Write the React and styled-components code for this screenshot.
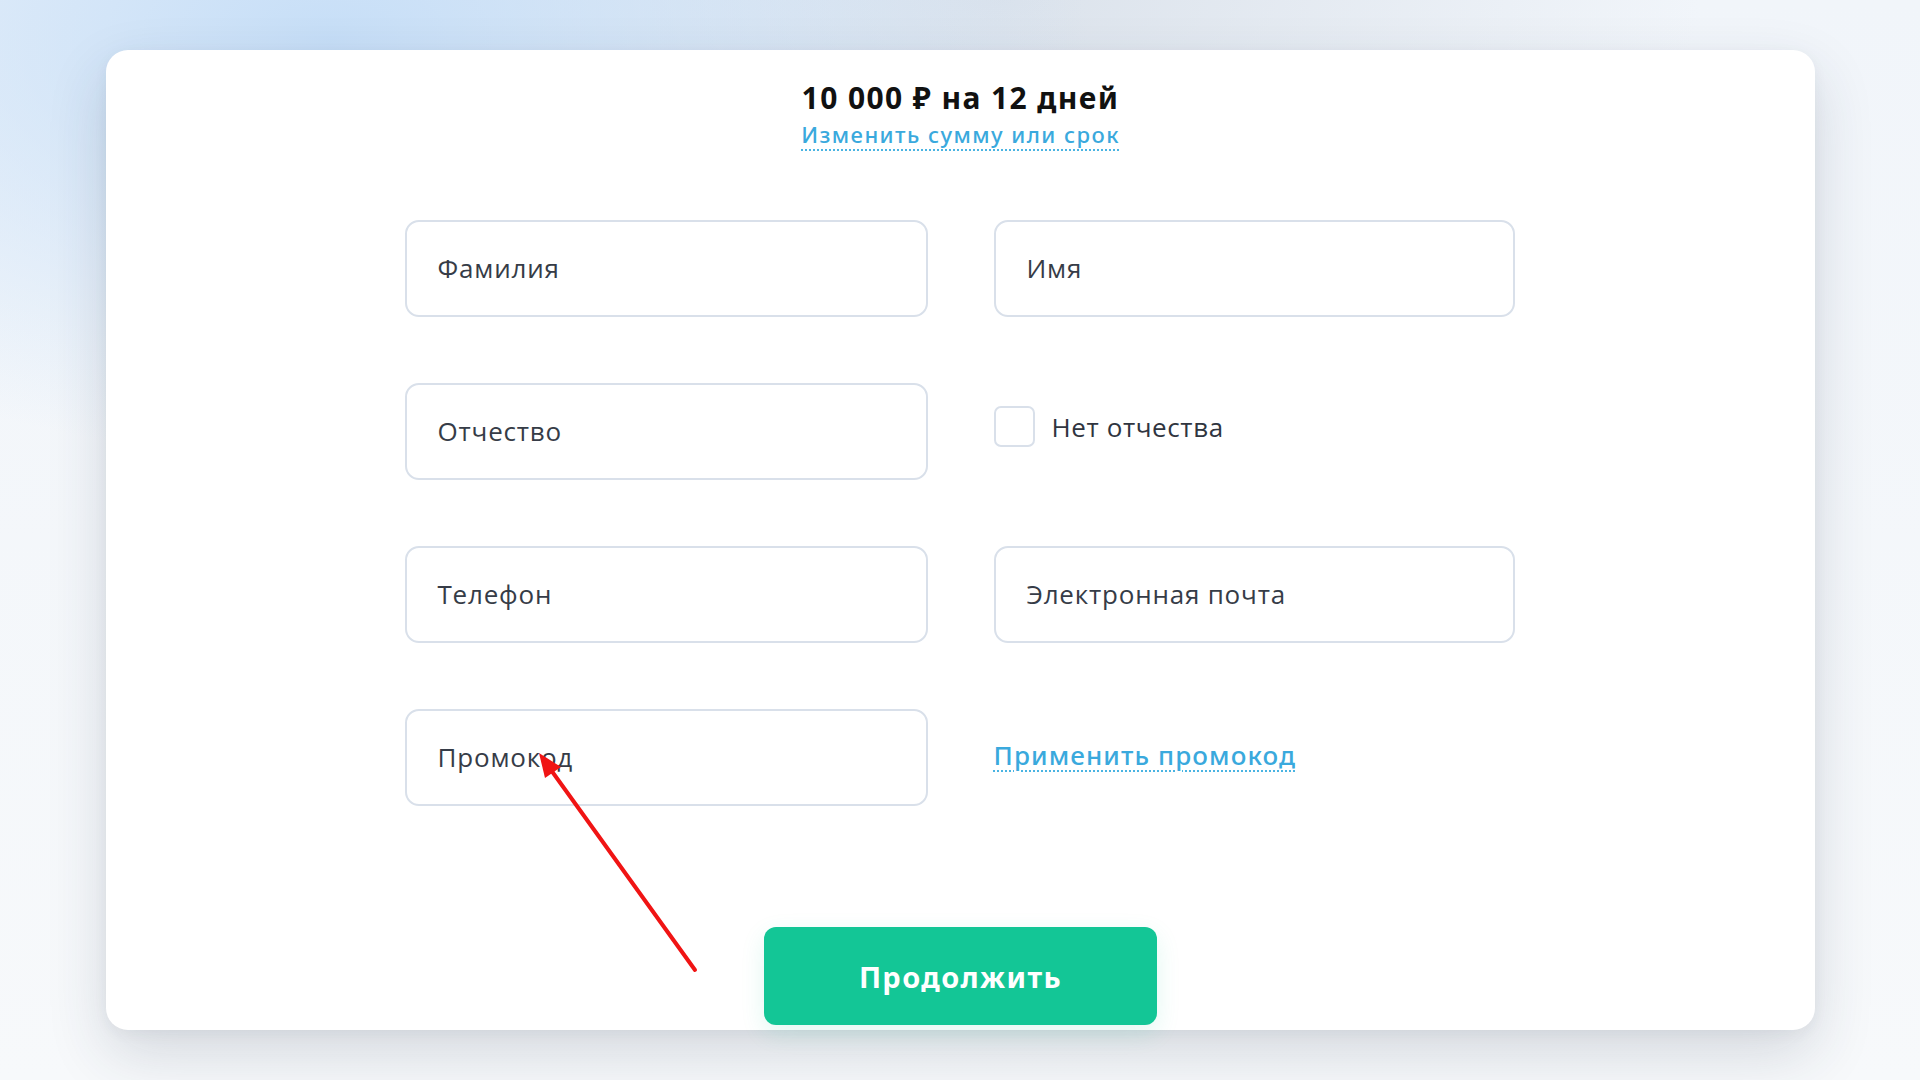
import React from 'react';
import styled, { createGlobalStyle } from 'styled-components';

const GlobalStyle = createGlobalStyle`
    html, body {
        margin: 0;
        padding: 0;
    }
    body {
        width: 1920px;
        height: 1080px;
        overflow: hidden;
        font-family: "Open Sans", "Liberation Sans", sans-serif;
        background:
            radial-gradient(ellipse 760px 420px at 330px 40px, rgba(196, 221, 247, 0.95) 0%, rgba(196, 221, 247, 0) 100%),
            radial-gradient(ellipse 700px 300px at 1000px 0px, rgba(214, 222, 232, 0.8) 0%, rgba(214, 222, 232, 0) 100%),
            linear-gradient(180deg, #f1f5fa 0%, #f7f9fb 100%);
    }
`;

const Page = styled.div`
    box-sizing: border-box;
    height: 1080px;
    padding: 50px 105px 50px 106px;
`;

const Card = styled.div`
    position: relative;
    box-sizing: border-box;
    height: 980px;
    background: #ffffff;
    border-radius: 22px;
    box-shadow: 0 24px 60px rgba(40, 52, 72, 0.16), 0 4px 14px rgba(40, 52, 72, 0.05);
    padding: 30px 0 4px;
    display: flex;
    flex-direction: column;
    align-items: center;
`;

const Title = styled.div`
    font-family: "Noto Sans", "DejaVu Sans", sans-serif;
    font-weight: 700;
    font-size: 30px;
    line-height: 36px;
    letter-spacing: 1.4px;
    color: #111111;
`;

const DottedLink = styled.a`
    font-family: "Noto Sans", "DejaVu Sans", sans-serif;
    font-weight: 500;
    font-size: ${p => p.$size || 22}px;
    line-height: ${p => p.$lh || 26}px;
    letter-spacing: ${p => p.$ls || 1.45}px;
    color: #3aa9dd;
    text-decoration: underline dotted #4ab4e2;
    text-decoration-thickness: 2px;
    text-underline-offset: 6px;
    cursor: pointer;
`;

const SumBlock = styled.div`
    display: flex;
    flex-direction: column;
    align-items: center;
    gap: 5px;
`;

const Form = styled.div`
    margin-top: 73px;
    margin-right: 2px;
    display: grid;
    grid-template-columns: 523px 521px;
    grid-auto-rows: 97px;
    column-gap: 66px;
    row-gap: 66px;
`;

const Field = styled.div`
    box-sizing: border-box;
    border: 2px solid #d9e0ea;
    border-radius: 14px;
    padding: 0 31px;
    display: flex;
    align-items: center;
    padding-bottom: 2px;
    font-size: 26px;
    color: #363c47;
    letter-spacing: 0.8px;
`;

const Side = styled.div`
    display: flex;
    align-items: center;
    padding-bottom: ${p => p.$lift || 0}px;
`;

const Box = styled.span`
    box-sizing: border-box;
    width: 41px;
    height: 41px;
    border: 2px solid #d9e0ea;
    border-radius: 7px;
    margin-right: 17px;
`;

const BoxLabel = styled.span`
    font-size: 26px;
    color: #30353f;
    letter-spacing: 0.6px;
`;

const Submit = styled.button`
    margin-top: 121px;
    width: 393px;
    height: 98px;
    border: none;
    border-radius: 12px;
    background: #13c696;
    color: #ffffff;
    font-family: "Noto Sans", "DejaVu Sans", sans-serif;
    font-weight: 700;
    font-size: 29px;
    letter-spacing: 1.4px;
    box-shadow: 0 8px 24px rgba(19, 198, 150, 0.12);
    cursor: pointer;
`;

const Pointer = styled.svg`
    position: absolute;
    left: 420px;
    top: 690px;
    width: 190px;
    height: 240px;
    pointer-events: none;
`;

export default function App() {
    return (
        <>
            <GlobalStyle />
            <Page>
                <Card>
                    <SumBlock>
                        <Title>10 000 ₽ на 12 дней</Title>
                        <DottedLink>Изменить сумму или срок</DottedLink>
                    </SumBlock>

                    <Form>
                        <Field>Фамилия</Field>
                        <Field>Имя</Field>
                        <Field>Отчество</Field>
                        <Side $lift={10}>
                            <Box />
                            <BoxLabel>Нет отчества</BoxLabel>
                        </Side>
                        <Field>Телефон</Field>
                        <Field>Электронная почта</Field>
                        <Field>Промокод</Field>
                        <Side $lift={6}>
                            <DottedLink $size={26} $lh={32} $ls={1.1}>Применить промокод</DottedLink>
                        </Side>
                    </Form>

                    <Submit>Продолжить</Submit>

                    <Pointer viewBox="0 0 190 240">
                        <line x1="169" y1="230" x2="25" y2="30" stroke="#f01414" strokeWidth="4" strokeLinecap="round" />
                        <polygon points="13,13 35,27 19,38" fill="#f01414" />
                    </Pointer>
                </Card>
            </Page>
        </>
    );
}
